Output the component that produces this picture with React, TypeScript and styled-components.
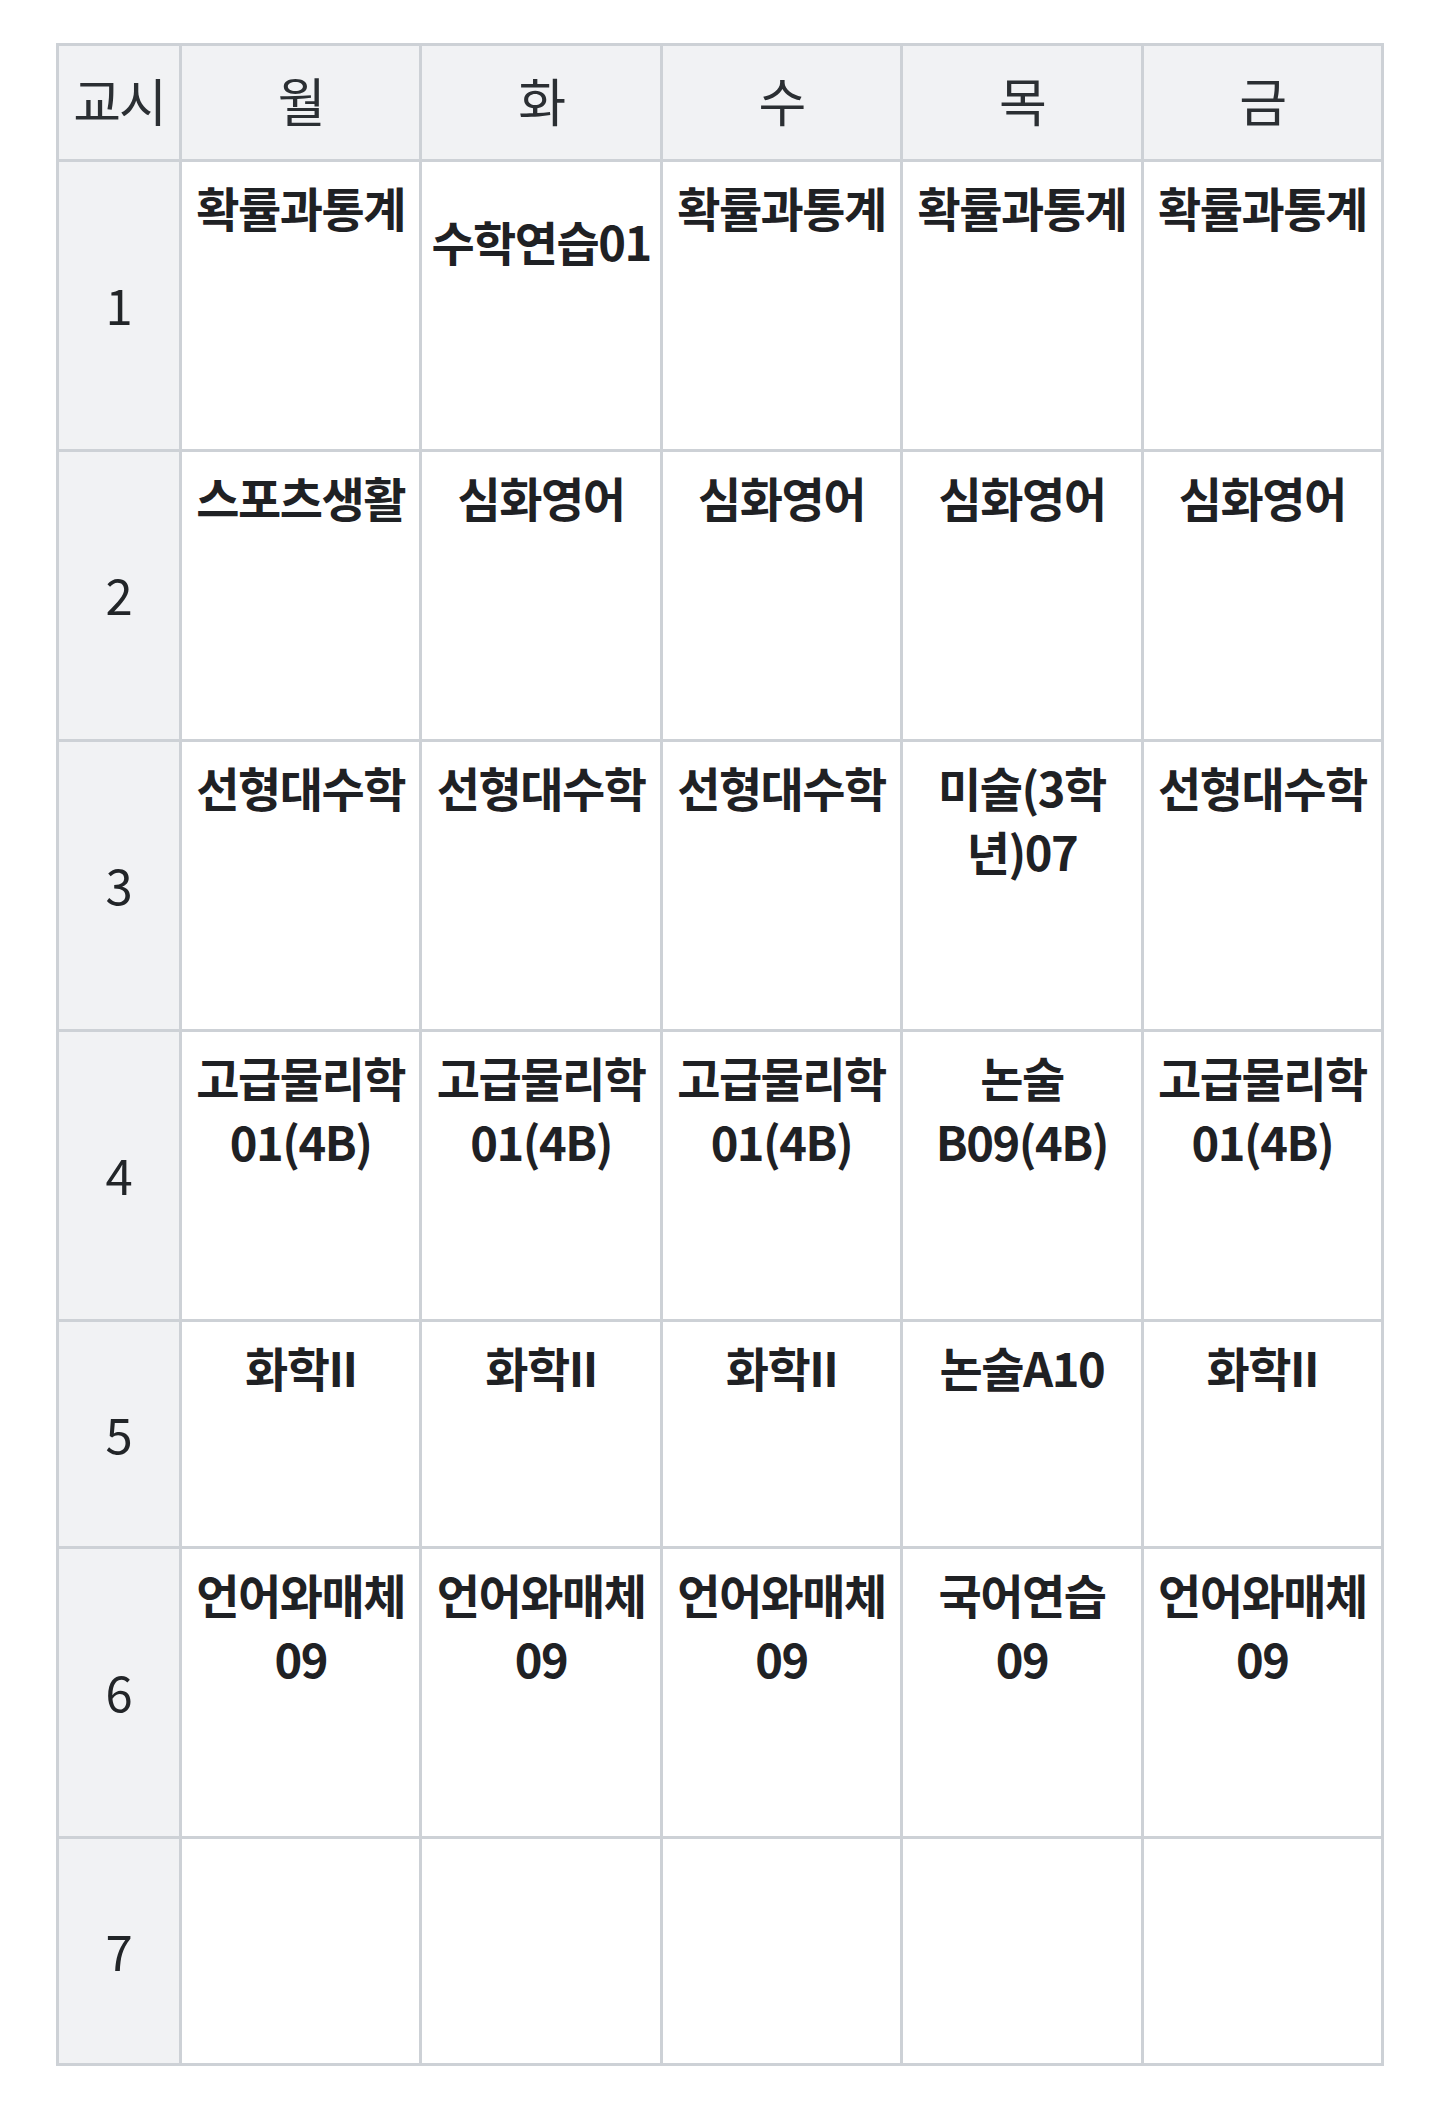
import React from 'react';
import styled, { createGlobalStyle } from 'styled-components';

const GlobalStyle = createGlobalStyle`
  html, body {
    margin: 0;
    padding: 0;
    background: #ffffff;
  }
  body {
    font-family: "Noto Sans CJK KR", "Noto Sans", sans-serif;
  }
`;

const Page = styled.div`
  padding: 43px 0 48px 56px;
`;

const Timetable = styled.div`
  display: grid;
  width: 1328px;
  box-sizing: border-box;
  padding: 3px;
  gap: 3px;
  grid-template-columns: 120px repeat(5, 1fr);
  grid-template-rows: 113px repeat(4, 287px) 224px 287px 224px;
  background: #cdd1d6;
`;

const HeadCell = styled.div`
  display: flex;
  align-items: center;
  justify-content: center;
  background: #f1f2f4;
  color: #2b2f33;
  font-size: 52px;
  font-weight: 400;
  letter-spacing: -2px;
  padding-bottom: 6px;
`;

const PeriodCell = styled.div`
  display: flex;
  align-items: center;
  justify-content: center;
  background: #f1f2f4;
  color: #222528;
  font-size: 49px;
  font-weight: 400;
  padding-bottom: 4px;
`;

const ClassCell = styled.div<{ $shift?: number }>`
  background: #ffffff;
  color: #1f2124;
  font-size: 47px;
  font-weight: 700;
  letter-spacing: -1.5px;
  line-height: 64px;
  text-align: center;
  white-space: nowrap;
  padding-top: ${p => 13 + (p.$shift ?? 0)}px;
`;

const Line = styled.div``;

const days = ['월', '화', '수', '목', '금'];

type Slot = { lines: string[]; shift?: number };

const s = (...lines: string[]): Slot => ({ lines });

const schedule: Slot[][] = [
  [s('확률과통계'), { lines: ['수학연습01'], shift: 34 }, s('확률과통계'), s('확률과통계'), s('확률과통계')],
  [s('스포츠생활'), s('심화영어'), s('심화영어'), s('심화영어'), s('심화영어')],
  [s('선형대수학'), s('선형대수학'), s('선형대수학'), s('미술(3학', '년)07'), s('선형대수학')],
  [
    s('고급물리학', '01(4B)'),
    s('고급물리학', '01(4B)'),
    s('고급물리학', '01(4B)'),
    s('논술', 'B09(4B)'),
    s('고급물리학', '01(4B)'),
  ],
  [s('화학II'), s('화학II'), s('화학II'), s('논술A10'), s('화학II')],
  [
    s('언어와매체', '09'),
    s('언어와매체', '09'),
    s('언어와매체', '09'),
    s('국어연습', '09'),
    s('언어와매체', '09'),
  ],
  [s(), s(), s(), s(), s()],
];

export default function App() {
  return (
    <>
      <GlobalStyle />
      <Page>
        <Timetable>
          <HeadCell>교시</HeadCell>
          {days.map(d => (
            <HeadCell key={d}>{d}</HeadCell>
          ))}
          {schedule.map((row, i) => (
            <React.Fragment key={i}>
              <PeriodCell>{i + 1}</PeriodCell>
              {row.map((slot, j) => (
                <ClassCell key={j} $shift={slot.shift}>
                  {slot.lines.map((l, k) => (
                    <Line key={k}>{l}</Line>
                  ))}
                </ClassCell>
              ))}
            </React.Fragment>
          ))}
        </Timetable>
      </Page>
    </>
  );
}
